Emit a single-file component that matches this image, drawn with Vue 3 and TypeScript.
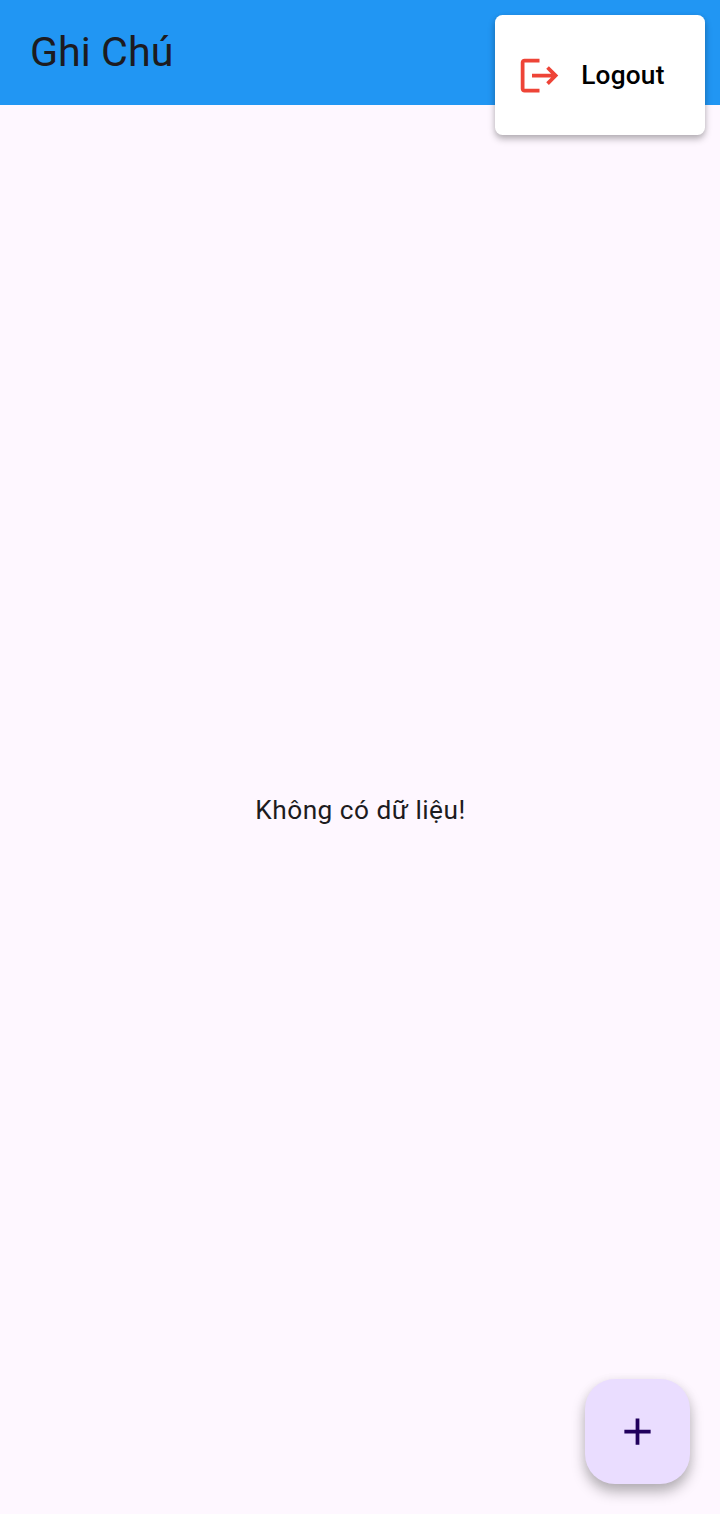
<script setup lang="ts">
const title = 'Ghi Chú'
const emptyMessage = 'Không có dữ liệu!'
const logoutLabel = 'Logout'
</script>

<template>
  <div class="screen">
    <header class="app-bar">
      <h1 class="title">{{ title }}</h1>
    </header>
    <main class="content">
      <p class="empty">{{ emptyMessage }}</p>
    </main>
    <div class="menu" role="menu">
      <button class="menu-item" role="menuitem" type="button">
        <svg class="logout-icon" viewBox="0 0 24 24" aria-hidden="true">
          <path d="M17 7l-1.41 1.41L18.17 11H8v2h10.17l-2.58 2.58L17 17l5-5-5-5zM4 5h8V3H4c-1.1 0-2 .9-2 2v14c0 1.1.9 2 2 2h8v-2H4V5z" />
        </svg>
        <span class="menu-label">{{ logoutLabel }}</span>
      </button>
    </div>
    <button class="fab" type="button" aria-label="+">
      <svg class="add-icon" viewBox="0 0 24 24" aria-hidden="true">
        <path d="M19 13h-6v6h-2v-6H5v-2h6V5h2v6h6v2z" />
      </svg>
    </button>
  </div>
</template>

<style>
body {
  margin: 0;
}
</style>

<style scoped>
.screen {
  position: relative;
  display: flex;
  flex-direction: column;
  width: 100%;
  height: 1514px;
  overflow: hidden;
  background: #fef7ff;
  color: #1d1b20;
  font-family: Roboto, sans-serif;
}
.app-bar {
  display: flex;
  align-items: center;
  flex: none;
  height: 105px;
  padding: 0 30px 2px;
  box-sizing: border-box;
  background: #2196f3;
}
.title {
  margin: 0;
  font-size: 41.25px;
  font-weight: 400;
  line-height: 52px;
}
.content {
  flex: 1;
  display: flex;
  align-items: center;
  justify-content: center;
  padding: 2px 0 0 1px;
}
.empty {
  margin: 0;
  font-size: 26.25px;
  line-height: 37.5px;
  letter-spacing: 0.47px;
}
.menu {
  position: absolute;
  top: 15px;
  right: 15px;
  width: 210px;
  height: 120px;
  padding: 15px 0;
  box-sizing: border-box;
  border-radius: 7.5px;
  background: #fff;
  box-shadow: 0 4px 7px rgba(0, 0, 0, 0.28), 0 1px 5px rgba(0, 0, 0, 0.06);
}
.menu-item {
  display: flex;
  align-items: center;
  gap: 19.25px;
  width: 100%;
  height: 90px;
  padding: 0 22px;
  border: 0;
  background: none;
  font-family: inherit;
}
.logout-icon {
  flex: none;
  width: 45px;
  height: 45px;
  fill: #ee4437;
}
.menu-label {
  font-size: 26.25px;
  font-weight: 500;
  letter-spacing: 0.19px;
  color: #000;
}
.fab {
  position: absolute;
  right: 30px;
  bottom: 30px;
  display: flex;
  align-items: center;
  justify-content: center;
  width: 105px;
  height: 105px;
  padding: 0;
  border: 0;
  border-radius: 30px;
  background: #eaddff;
  box-shadow: 0 8px 14px rgba(0, 0, 0, 0.28), 0 2px 12px rgba(0, 0, 0, 0.06);
}
.add-icon {
  width: 45px;
  height: 45px;
  fill: #21005d;
}
</style>
